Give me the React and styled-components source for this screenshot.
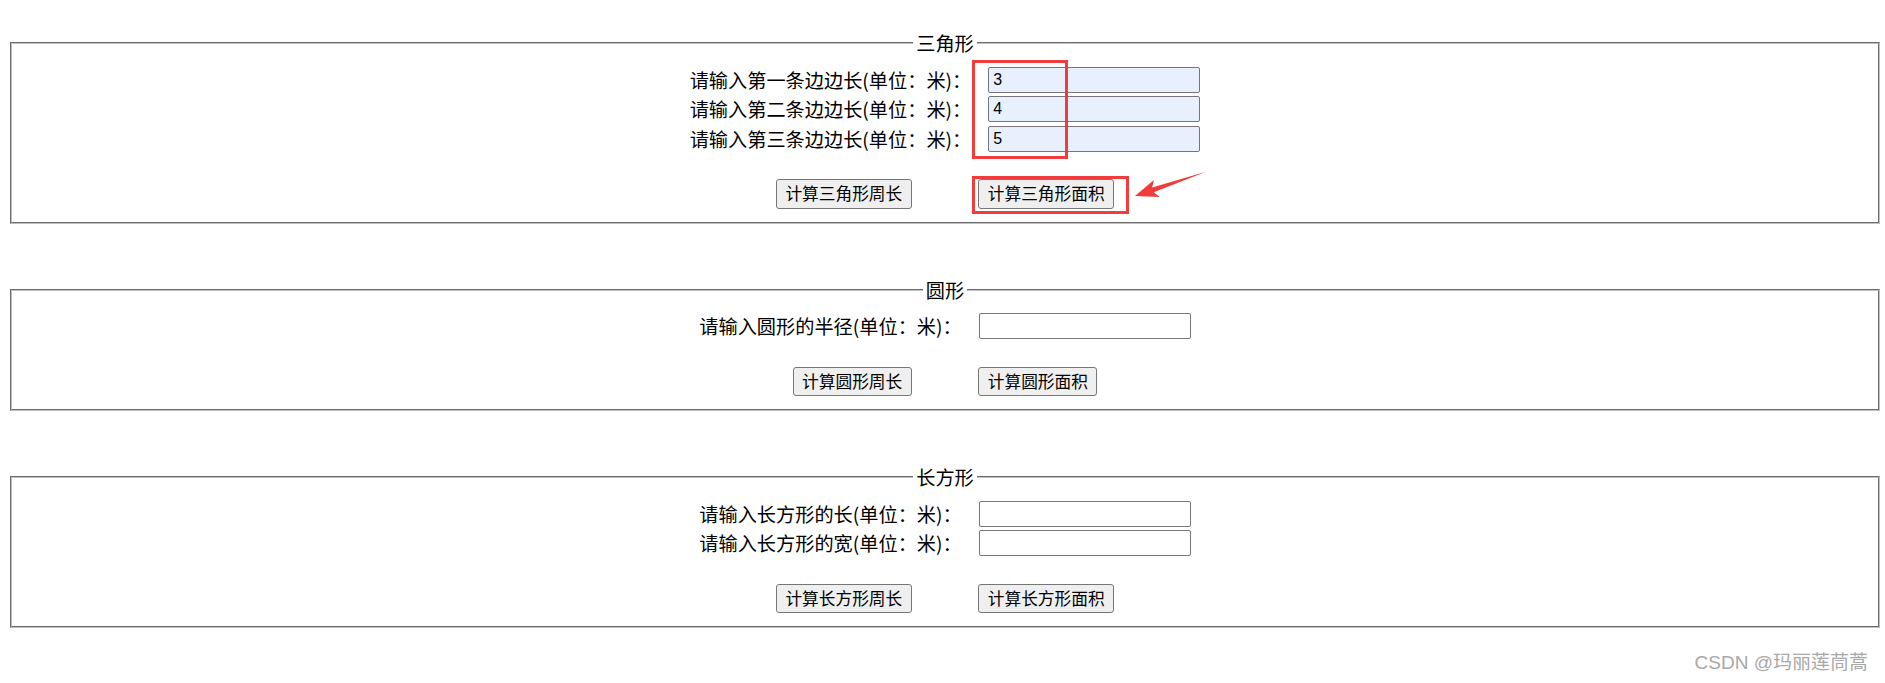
import React from 'react';
import styled, { createGlobalStyle } from 'styled-components';

const GlobalStyle = createGlobalStyle`
	html, body {
		margin: 0;
		padding: 0;
		background: #fff;
	}
	body {
		font-family: "Noto Sans CJK SC", "Microsoft YaHei", sans-serif;
		color: #000;
	}
`

const shapes = [
	{
		title: '三角形',
		filled: true,
		fields: [
			{ label: '请输入第一条边边长(单位：米)：', value: '3' },
			{ label: '请输入第二条边边长(单位：米)：', value: '4' },
			{ label: '请输入第三条边边长(单位：米)：', value: '5' },
		],
		buttons: ['计算三角形周长', '计算三角形面积'],
	},
	{
		title: '圆形',
		fields: [
			{ label: '请输入圆形的半径(单位：米)：' },
		],
		buttons: ['计算圆形周长', '计算圆形面积'],
	},
	{
		title: '长方形',
		fields: [
			{ label: '请输入长方形的长(单位：米)：' },
			{ label: '请输入长方形的宽(单位：米)：' },
		],
		buttons: ['计算长方形周长', '计算长方形面积'],
	},
]

const ShapeForm = ({ data }) => {
	const { title, fields, buttons, filled } = data;

	return (
		<Fieldset>
			<Legend>{ title }</Legend>
			<Rows>
				{fields.map((f, i) => (
					<Row key={i}>
						<Label>{ f.label }</Label>
						<Input $filled={filled} defaultValue={f.value || ''} />
					</Row>
				))}
			</Rows>
			<Actions>
				{buttons.map(b => <Button key={b}>{ b }</Button>)}
			</Actions>
		</Fieldset>
	)
}

const App = () => (
	<>
		<GlobalStyle />
		<Page>
			{shapes.map(s => <ShapeForm key={s.title} data={s} />)}

			{/* screenshot annotations */}
			<MarkBox style={{ left: 972, top: 60, width: 96, height: 99 }} />
			<MarkBox style={{ left: 972, top: 176, width: 157, height: 38 }} />
			<Arrow width="90" height="50" viewBox="0 0 90 50">
				<g transform="translate(10 36) rotate(-18.9)">
					<polygon points="0,0 23,-9 19,-2.5 75,0 19,2.5 23,9" fill="#f03c3c" />
				</g>
			</Arrow>
			<Watermark>CSDN @玛丽莲茼蒿</Watermark>
		</Page>
	</>
)

export default App;

const Page = styled.div`
	position: relative;
	width: 1885px;
	height: 683px;
	box-sizing: border-box;
	padding: 31px 5px 0 10px;
	display: flex;
	flex-direction: column;
	gap: 54px;
	overflow: hidden;
`

const Fieldset = styled.fieldset`
	margin: 0;
	min-width: 0;
	padding: 10px 12px 13px;
	border: 2px groove rgb(192, 192, 192);
`

const Legend = styled.legend`
	margin: 0 auto;
	padding: 0 3px;
	font-size: 19.2px;
	line-height: 24px;
`

const Rows = styled.div`
	display: flex;
	flex-direction: column;
`

const Row = styled.div`
	display: flex;
	justify-content: center;
	align-items: center;
	height: 29.5px;
`

const Label = styled.span`
	font-size: 19.2px;
	line-height: 24px;
	white-space: nowrap;
`

const Input = styled.input`
	box-sizing: border-box;
	width: 212px;
	height: 26px;
	margin: 0 0 0 17px;
	padding: 0 4px;
	border: 1px solid #767676;
	border-radius: 2px;
	background: ${ props => props.$filled ? '#e8f0fe' : '#fff' };
	font-family: "Liberation Sans", Arial, sans-serif;
	font-size: 16px;
	color: #000;
	outline: none;
`

const Actions = styled.div`
	display: flex;
	justify-content: center;
	gap: 66.6px;
	margin-top: 25.5px;
`

const Button = styled.button`
	box-sizing: border-box;
	height: 29.5px;
	padding: 0 8.5px;
	border: 1px solid #767676;
	border-radius: 3px;
	background: #efefef;
	font-family: "Noto Sans CJK SC", sans-serif;
	font-size: 16.7px;
	line-height: 1;
	color: #000;
`

const MarkBox = styled.div`
	position: absolute;
	box-sizing: border-box;
	border: 3px solid #f03c3c;
	pointer-events: none;
`

const Arrow = styled.svg`
	position: absolute;
	left: 1125px;
	top: 160px;
`

const Watermark = styled.div`
	position: absolute;
	right: 17px;
	top: 651px;
	font-family: "Liberation Sans", "Noto Sans CJK SC", sans-serif;
	font-size: 19px;
	line-height: 24px;
	color: #a8a8a8;
	white-space: nowrap;
`
